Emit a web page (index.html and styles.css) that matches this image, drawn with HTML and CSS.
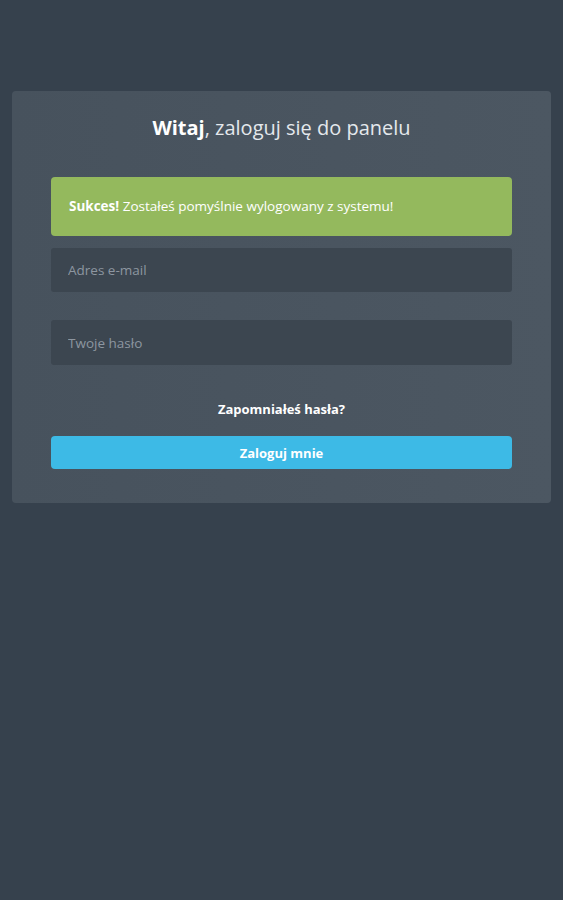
FILE: index.html
```html
<!DOCTYPE html>
<html lang="pl">
<head>
    <meta charset="utf-8">
    <meta name="viewport" content="width=device-width, initial-scale=1">
    <title>Panel - logowanie</title>
    <link rel="stylesheet" href="styles.css">
</head>
<body>
<div class="page">
    <form class="login-box" onsubmit="return false">
        <div class="login-title"><strong>Witaj</strong>, zaloguj się do panelu</div>
        <div class="alert-success"><strong>Sukces!</strong> Zostałeś pomyślnie wylogowany z systemu!</div>
        <input class="field" type="email" name="email" placeholder="Adres e-mail" autocomplete="off">
        <input class="field field-pass" type="password" name="password" placeholder="Twoje hasło">
        <a class="forgot" href="#">Zapomniałeś hasła?</a>
        <button class="btn-login" type="submit">Zaloguj mnie</button>
    </form>
</div>
</body>
</html>
```
FILE: styles.css
```css
html, body {
    height: 100%;
}

body {
    margin: 0;
    background-color: #36414d;
    font-family: "Open Sans", "Liberation Sans", sans-serif;
}

.page {
    padding: 91px 12px 0 12px;
}

.login-box {
    display: flex;
    flex-direction: column;
    background: linear-gradient(to right, #47525d, #4c5762);
    border-radius: 4px;
    padding: 23px 39px 34px 39px;
    margin: 0;
}

.login-title {
    text-align: center;
    color: #e4e8ec;
    font-size: 20px;
    line-height: 28px;
    margin-bottom: 35px;
}

.login-title strong {
    color: #ffffff;
    font-weight: 700;
}

.alert-success {
    background-color: #94b95d;
    color: #ffffff;
    border-radius: 4px;
    font-size: 13.5px;
    line-height: 19px;
    padding: 20px 18px;
    margin-bottom: 12px;
}

.field {
    box-sizing: border-box;
    height: 44px;
    border: none;
    border-radius: 3px;
    background-color: #3c4650;
    color: #e9ecef;
    font-family: "Open Sans", "Liberation Sans", sans-serif;
    font-size: 13.5px;
    padding: 0 17px;
    outline: none;
}

.field::placeholder {
    color: #8d96a0;
}

.field-pass {
    height: 45px;
    margin-top: 28px;
}

.forgot {
    align-self: center;
    color: #ffffff;
    font-size: 13px;
    font-weight: 700;
    line-height: 20px;
    text-decoration: none;
    margin-top: 34px;
}

.btn-login {
    height: 33px;
    margin-top: 17px;
    border: none;
    border-radius: 4px;
    background-color: #3dbae6;
    color: #ffffff;
    font-family: "Open Sans", "Liberation Sans", sans-serif;
    font-size: 13px;
    font-weight: 700;
    cursor: pointer;
}
```
